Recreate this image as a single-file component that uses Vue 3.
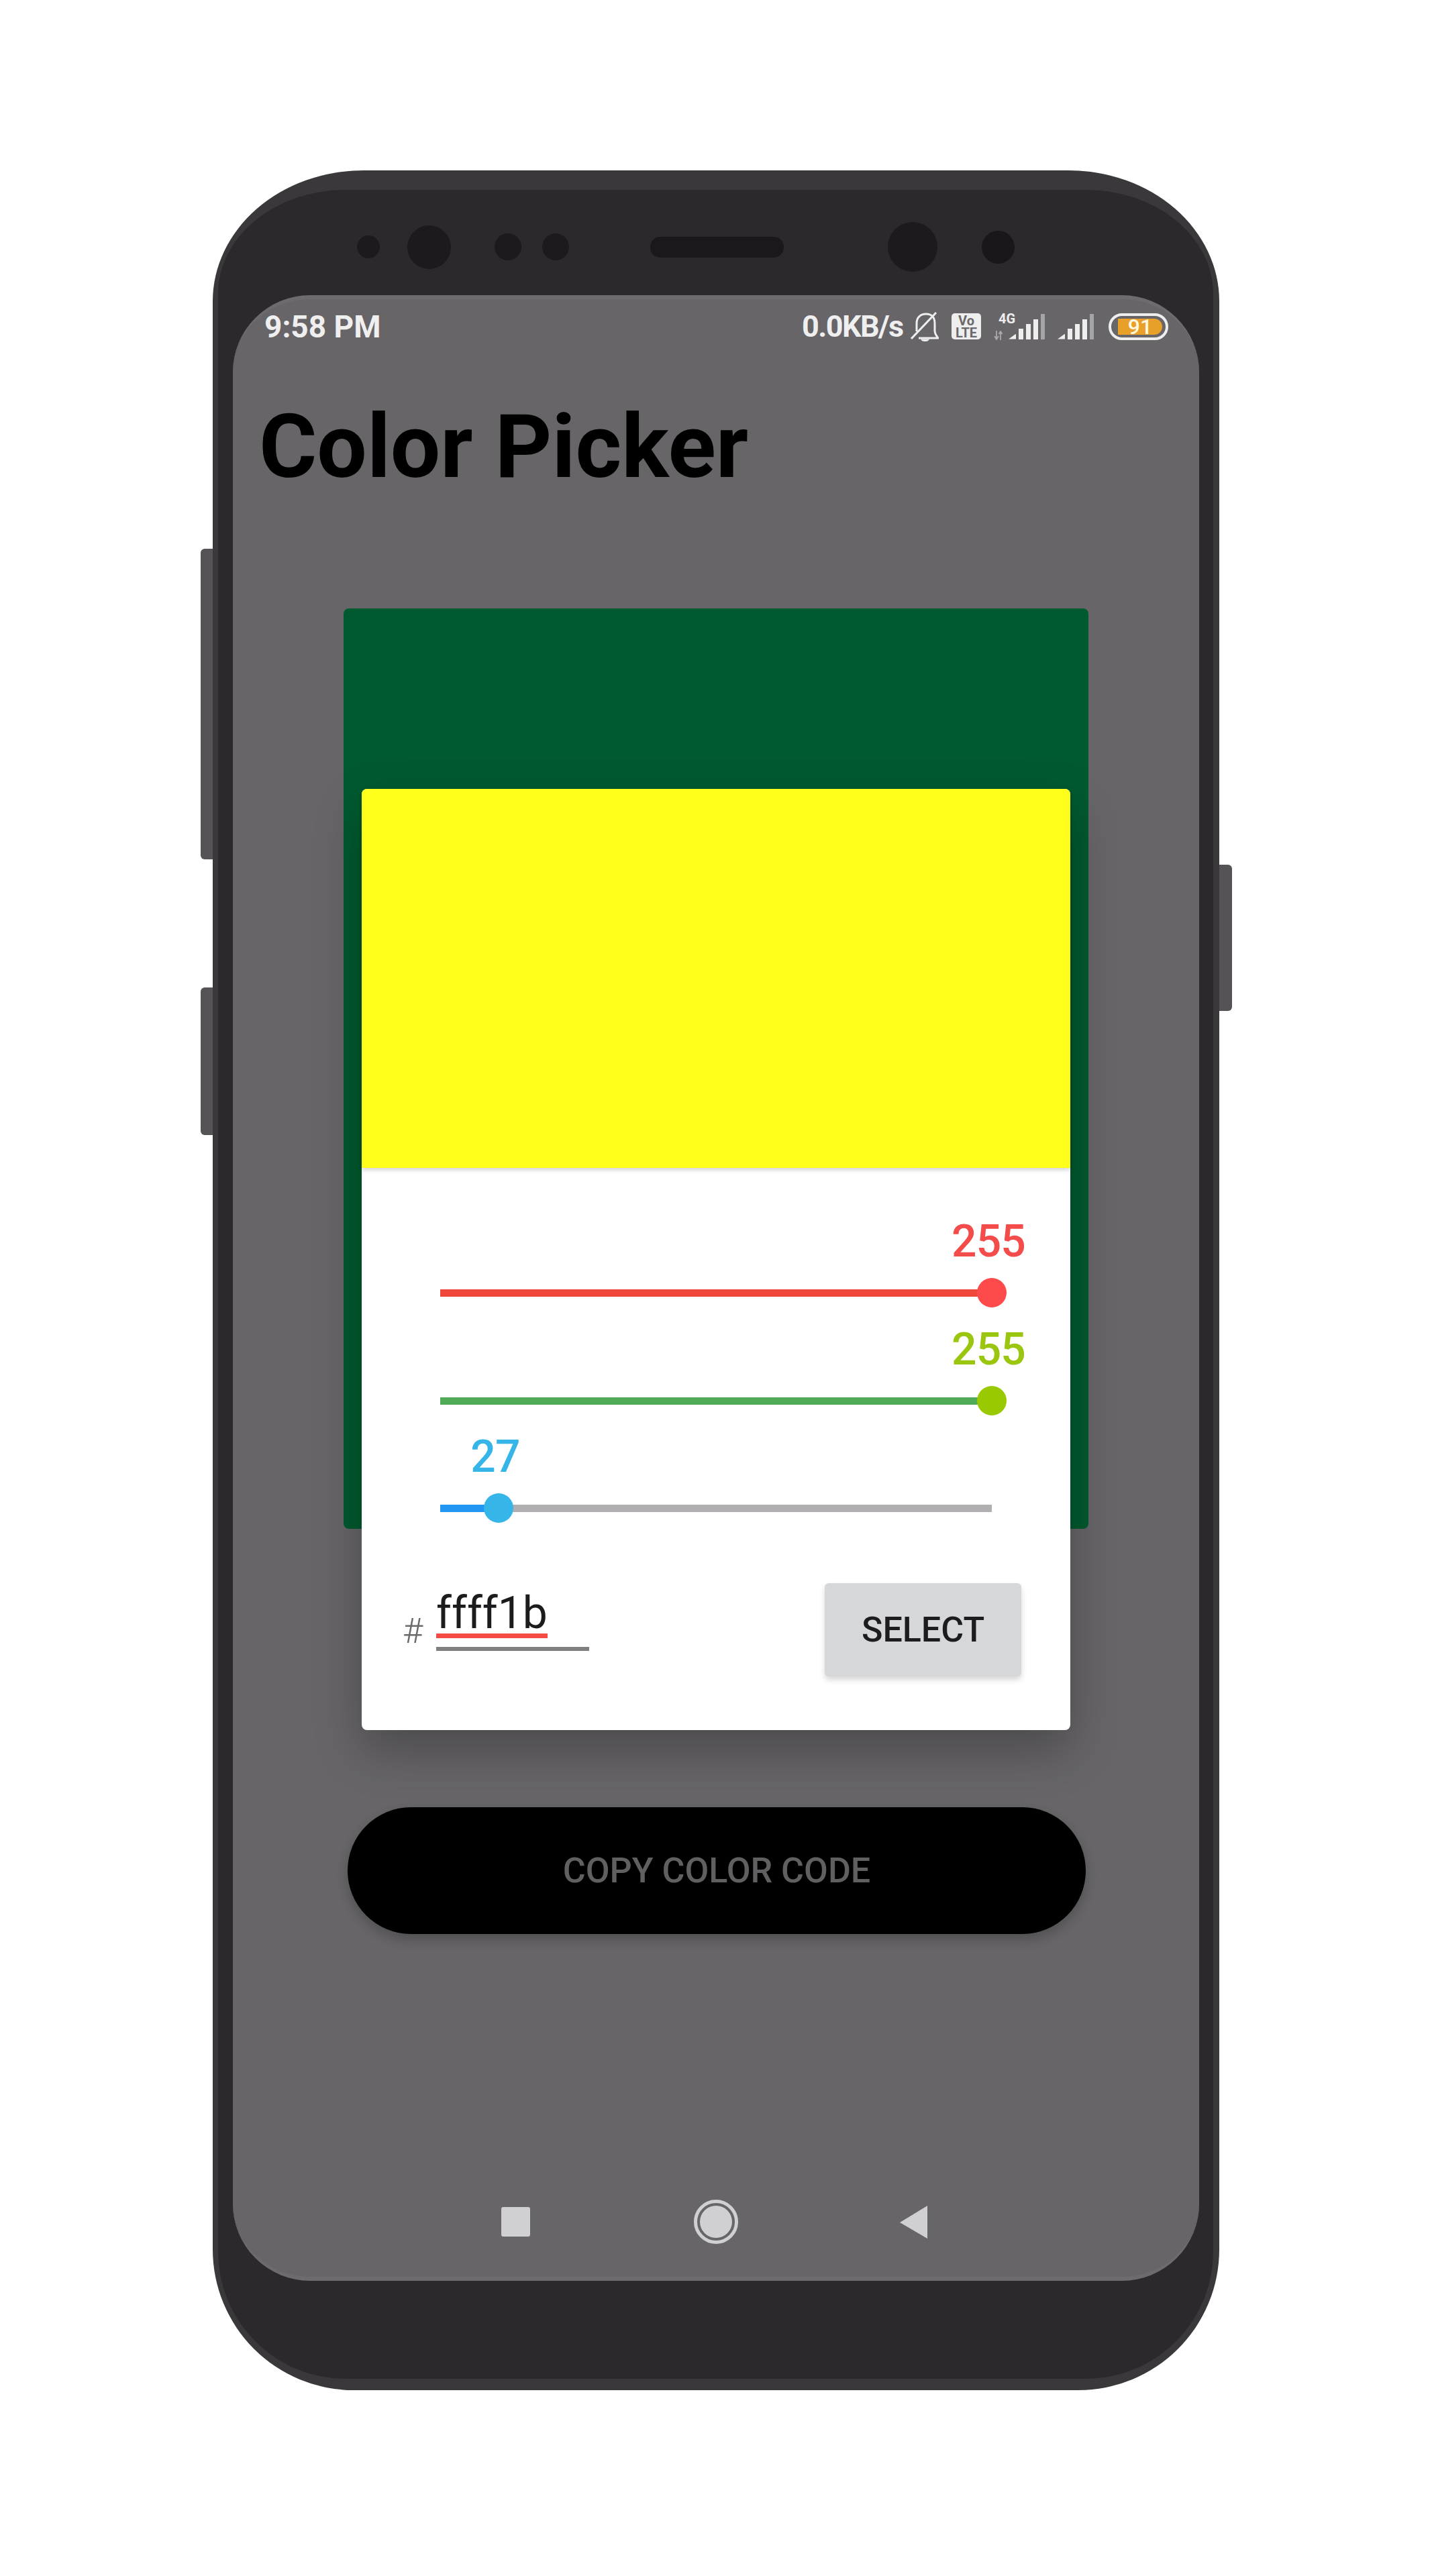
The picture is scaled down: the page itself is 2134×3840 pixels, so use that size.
<script setup>
const sliders = [
  { value: 255, label: '#f44b4b', fill: '#ef483a', thumb: '#ff4a4c' },
  { value: 255, label: '#9bc60f', fill: '#51ab56', thumb: '#99c900' },
  { value: 27, label: '#35b5e8', fill: '#2196f3', thumb: '#35b5e8' },
]
const TRACK = 822
const pos = (v) => (v / 255) * TRACK
const bars = [
  { w: 11, h: 8, tri: true }, { w: 7, h: 16 }, { w: 7, h: 23 }, { w: 7, h: 30 }, { w: 6, h: 38, dim: true },
]
</script>

<template>
  <div class="page">
    <div class="phone">
      <div class="side-btn left-a"></div>
      <div class="side-btn left-b"></div>
      <div class="side-btn right-a"></div>
      <div class="bezel">
        <div class="sensors">
          <span class="hole h1"></span>
          <span class="hole h2"></span>
          <span class="hole h3"></span>
          <span class="hole h4"></span>
          <span class="speaker"></span>
          <span class="hole h5"></span>
          <span class="hole h6"></span>
        </div>
        <div class="screen">
          <div class="status">
            <span class="clock">9:58 PM</span>
            <span class="speed">0.0KB/s</span>
            <svg class="bell" viewBox="0 0 42 44" width="42" height="44">
              <path d="M9 29V17C9 8 15 3 23 3C31 3 36 8 36 17V28C36 33 39 36 41 39H12" fill="none" stroke="#eeeeef" stroke-width="3" stroke-linejoin="round" />
              <path d="M15 40.500h13c-1 2.500-3 3.500-6.500 3.500S16 43 15 40.500z" fill="#eeeeef" />
              <path d="M1 40 38 1" stroke="#eeeeef" stroke-width="3" />
            </svg>
            <span class="volte"><span>Vo</span><span>LTE</span></span>
            <span class="net">
              <span class="four-g">4G</span>
              <svg class="arrows" viewBox="0 0 15 14" width="15" height="14">
                <path d="M4 0v11M1 8l3 5 3-5M10 14V3M7.500 5 10 1l2.500 4" fill="none" stroke="#a9a8aa" stroke-width="1.800" />
              </svg>
            </span>
            <span class="signal first">
              <i v-for="(b, i) in bars" :key="i" :class="{ tri: b.tri, dim: b.dim }" :style="{ width: b.w + 'px', height: b.h + 'px' }"></i>
            </span>
            <span class="signal second">
              <i v-for="(b, i) in bars" :key="i" :class="{ tri: b.tri, dim: b.dim }" :style="{ width: b.w + 'px', height: b.h + 'px' }"></i>
            </span>
            <span class="battery"><span class="level">91</span></span>
          </div>

          <h1 class="title">Color Picker</h1>

          <div class="main">
            <div class="green-card"></div>
            <button class="copy">COPY COLOR CODE</button>

            <div class="dialog">
              <div class="swatch"></div>
              <div class="controls">
                <div v-for="(s, i) in sliders" :key="i" class="slider">
                  <div class="value" :style="{ color: s.label, marginLeft: pos(s.value) - 67 + 'px' }">{{ s.value }}</div>
                  <div class="track">
                    <div class="fill" :style="{ width: pos(s.value) + 'px', background: s.fill }"></div>
                    <div class="thumb" :style="{ left: pos(s.value) - 22 + 'px', background: s.thumb }"></div>
                  </div>
                </div>
              </div>
              <div class="entry">
                <span class="hash">#</span>
                <div class="field">
                  <span class="hex">ffff1b</span>
                  <div class="line"></div>
                </div>
                <button class="select">SELECT</button>
              </div>
            </div>
          </div>

          <div class="nav">
            <span class="nav-square"></span>
            <span class="nav-home"><span></span></span>
            <svg class="nav-back" viewBox="0 0 41 49" width="41" height="49">
              <path d="M41 0v49L0 25z" fill="#d0cfd2" />
            </svg>
          </div>
        </div>
      </div>
    </div>
  </div>
</template>

<style>
html, body { margin: 0; background: #fff; }
</style>

<style scoped>
.page {
  width: 2134px;
  height: 3840px;
  padding: 254px 0 0 317px;
  box-sizing: border-box;
  font-family: Roboto, "Liberation Sans", sans-serif;
  background: #fff;
}
.phone {
  position: relative;
  width: 1500px;
  height: 3309px;
  padding: 29px 9px 17px 8px;
  box-sizing: border-box;
  background: #3a383b;
  border-radius: 225px 225px 210px 210px / 195px 195px 210px 210px;
}
.side-btn { position: absolute; width: 18px; background: #555356; }
.left-a { left: -18px; top: 564px; height: 463px; border-radius: 6px 0 0 6px; }
.left-b { left: -18px; top: 1218px; height: 220px; border-radius: 6px 0 0 6px; }
.right-a { right: -19px; width: 19px; top: 1035px; height: 218px; border-radius: 0 6px 6px 0; }
.bezel {
  height: 100%;
  padding: 157px 21px 146px 22px;
  box-sizing: border-box;
  background: #2b292c;
  border-radius: 190px 190px 190px 190px / 155px 155px 190px 190px;
  position: relative;
}
.sensors {
  height: 157px;
  margin-top: -157px;
  display: flex;
  align-items: center;
  padding: 13px 0 0 189px;
  box-sizing: border-box;
}
.hole { display: block; border-radius: 50%; background: #1c1a1d; flex: none; }
.speaker { display: block; width: 199px; height: 31px; border-radius: 15px; background: #1a181b; flex: none; margin-left: 121px; }
.h1 { width: 34px; height: 34px; margin-left: -4px; }
.h2 { width: 65px; height: 65px; margin-left: 41px; }
.h3 { width: 40px; height: 40px; margin-left: 65px; }
.h4 { width: 40px; height: 40px; margin-left: 31px; }
.h5 { width: 74px; height: 74px; margin-left: 155px; }
.h6 { width: 49px; height: 49px; margin-left: 66px; background: #19171a; }

.screen {
  height: 2960px;
  display: flex;
  flex-direction: column;
  background: #676568;
  border-radius: 115px;
  border-top: 6px solid #6d6b6e;
  border-bottom: 6px solid #6d6b6e;
  box-sizing: border-box;
  overflow: hidden;
}
.status {
  display: flex;
  align-items: center;
  height: 81px;
  padding-left: 47px;
  flex: none;
  color: #f0eff0;
  font-size: 46px;
  font-weight: 700;
}
.clock { width: 801px; flex: none; }
.speed { flex: none; width: 162px; font-size: 45px; letter-spacing: -1.6px; }
.bell { flex: none; }
.volte {
  flex: none;
  margin-left: 19px;
  width: 44px;
  height: 39px;
  border-radius: 5px;
  background: #eeeeef;
  color: #6a686b;
  font-size: 20px;
  font-weight: 700;
  line-height: 18px;
  display: flex;
  flex-direction: column;
  align-items: center;
  justify-content: center;
}
.net {
  flex: none;
  width: 22px;
  height: 40px;
  margin-left: 19px;
  display: flex;
  flex-direction: column;
  justify-content: space-between;
  align-items: flex-start;
  position: relative;
}
.four-g { font-size: 20px; line-height: 16px; font-weight: 700; margin-left: 7px; color: #eeeeef; }
.arrows { display: block; }
.signal { flex: none; display: flex; align-items: flex-end; gap: 4px; height: 38px; }
.signal i { display: block; background: #eeeeef; }
.signal i.tri { clip-path: polygon(100% 0, 100% 100%, 0 100%); }
.signal i.dim { background: #a5a4a6; }
.first { margin-left: 0; }
.second { margin-left: 19px; }
.battery {
  flex: none;
  margin-left: 22px;
  width: 89px;
  height: 40px;
  box-sizing: border-box;
  padding: 4px 5px 4px 10px;
  border: 4px solid #eeeeef;
  border-radius: 20px;
  display: flex;
}
.level {
  width: 100%;
  background: #e9a029;
  border-radius: 0 12px 12px 0;
  color: #fff8e0;
  font-size: 32px;
  line-height: 24px;
  font-weight: 500;
  text-align: center;
}

.title {
  margin: 64px 0 0 39px;
  font-size: 132px;
  line-height: 150px;
  font-weight: 700;
  color: #000;
  flex: none;
}

.main {
  position: relative;
  flex: 1;
  margin-top: 166px;
}
.green-card {
  margin-left: 165px;
  width: 1110px;
  height: 1372px;
  background: #005a2f;
  border-radius: 8px;
}
.copy {
  display: block;
  margin: 415px 0 0 171px;
  width: 1100px;
  height: 189px;
  border: 0;
  border-radius: 94.500px;
  background: #000;
  color: #606062;
  font: 500 52px Roboto, sans-serif;
  box-shadow: 0 8px 18px rgba(0, 0, 0, 0.22);
  padding: 0;
}
.dialog {
  position: absolute;
  left: 192px;
  top: 269px;
  width: 1056px;
  height: 1403px;
  border-radius: 8px;
  background: #fff;
  box-shadow: 0 30px 70px rgba(0, 0, 0, 0.28);
}
.swatch {
  height: 565px;
  background: #ffff1b;
  border-radius: 8px 8px 0 0;
  box-shadow: 0 3px 6px rgba(0, 0, 0, 0.18);
}
.controls { padding: 73px 0 0 117px; }
.slider { height: 160.500px; }
.value {
  width: 124px;
  height: 74px;
  text-align: center;
  font-size: 66px;
  line-height: 74px;
  font-weight: 500;
  letter-spacing: -0.8px;
}
.track {
  position: relative;
  width: 822px;
  height: 11px;
  margin-top: 34px;
  background: #b0aeb1;
}
.fill { height: 100%; }
.thumb {
  position: absolute;
  top: -17px;
  width: 44px;
  height: 44px;
  border-radius: 50%;
}
.entry {
  display: flex;
  align-items: flex-start;
  margin-top: 64.500px;
  padding: 0 73px 0 61px;
}
.hash {
  width: 50px;
  flex: none;
  margin-top: 47px;
  font-size: 52px;
  line-height: 50px;
  font-weight: 300;
  color: #6b6a6c;
}
.field { width: 228px; flex: none; margin-top: 7px; }
.hex {
  display: block;
  width: fit-content;
  padding-top: 8px;
  font-size: 66px;
  line-height: 60px;
  font-weight: 400;
  color: #1c1c1e;
  border-bottom: 7px solid #f44b45;
}
.line { height: 6px; margin-top: 13px; background: #7f7f80; }
.select {
  margin-left: auto;
  width: 293px;
  height: 139px;
  border: 0;
  border-radius: 6px;
  background: #d6d7d9;
  color: #1c1c1e;
  font: 500 52px Roboto, sans-serif;
  box-shadow: 0 5px 9px rgba(0, 0, 0, 0.16);
  padding: 0;
}

.nav {
  flex: none;
  height: 230px;
  display: flex;
  align-items: center;
  padding: 66px 0 0 400px;
  box-sizing: border-box;
}
.nav-square { width: 43px; height: 44px; border-radius: 3px; background: #d0cfd2; flex: none; }
.nav-home {
  flex: none;
  margin-left: 244px;
  width: 66px;
  height: 66px;
  box-sizing: border-box;
  border: 5px solid #d0cfd2;
  border-radius: 50%;
  padding: 4px;
}
.nav-home span { display: block; width: 48px; height: 48px; border-radius: 50%; background: #d0cfd2; }
.nav-back { flex: none; margin-left: 241px; }
</style>
